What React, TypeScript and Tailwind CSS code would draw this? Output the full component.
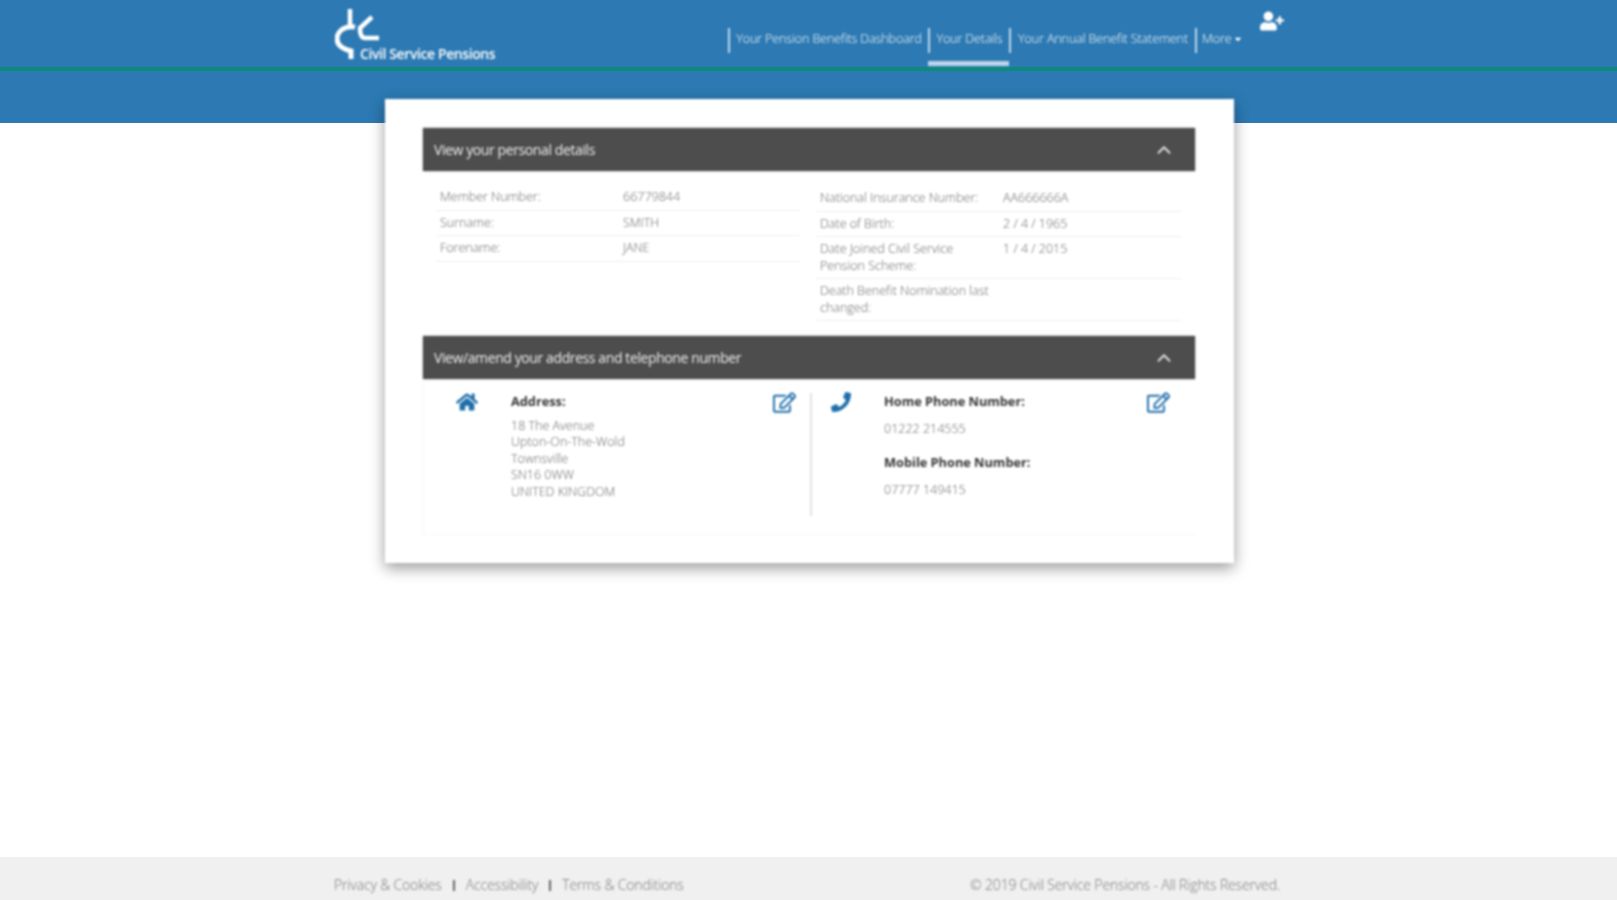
import { ChevronUp } from "lucide-react";
import { FaHome, FaPhone, FaUserPlus, FaRegEdit, FaCaretDown } from "react-icons/fa";

const leftRows = [
  { label: "Member Number:", value: "66779844" },
  { label: "Surname:", value: "SMITH" },
  { label: "Forename:", value: "JANE" },
];

const rightRows = [
  { label: "National Insurance Number:", value: "AA666666A" },
  { label: "Date of Birth:", value: "2 / 4 / 1965" },
  { label: "Date Joined Civil Service Pension Scheme:", value: "1 / 4 / 2015" },
  { label: "Death Benefit Nomination last changed:", value: "" },
];

const navItems = [
  { label: "Your Pension Benefits Dashboard", width: "w-[200px]" },
  { label: "Your Details", width: "w-[81px]", active: true },
  { label: "Your Annual Benefit Statement", width: "w-[186px]" },
];

function Logo() {
  return (
    <div className="relative h-[60px] w-[170px]">
      <svg viewBox="0 0 60 60" className="absolute left-0 top-0 h-[60px] w-[60px]" fill="none" stroke="#fff" strokeWidth="4.5">
        <path d="M15 1 V17" />
        <path d="M20 19 C9 17 2 24 2 31 C2 37 8 41 16 43 V51" strokeWidth="5" />
        <path d="M37 9 L25 20 Q25 30 30 30 H44" />
      </svg>
      <span className="absolute left-[25px] top-[37px] whitespace-nowrap text-[14px] font-semibold leading-[18px] tracking-[-0.4px] text-white">
        Civil Service Pensions
      </span>
    </div>
  );
}

function PanelHeader({ title }: { title: string }) {
  return (
    <div className="flex h-[43px] items-center justify-between bg-[#4d4d4d] pl-[11px] pr-[20px] text-[14px] tracking-[-0.4px] text-[#eeeeee] shadow-[0_0_2px_rgba(0,0,0,0.4)]">
      <span>{title}</span>
      <ChevronUp className="h-[22px] w-[22px] text-[#e4e4e4]" strokeWidth={2} />
    </div>
  );
}

function DetailRow({ label, value }: { label: string; value: string }) {
  return (
    <div className="flex border-b border-[#eeeeee] px-[4px] pb-[4px] pt-[4px] text-[12.5px] font-light leading-[16.5px] text-[#666666]">
      <div className="w-[183px] shrink-0 pr-[8px]">{label}</div>
      <div>{value}</div>
    </div>
  );
}

export default function App() {
  return (
    <div className="flex min-h-screen flex-col bg-white font-['Open_Sans',sans-serif]">
      <header className="h-[123px] bg-[#2c79b3]">
        <div className="h-[71px] border-b-[4px] border-[#0e8a7d]">
          <div className="ml-[335px] flex h-[67px] w-[990px] items-start blur-[0.8px]">
            <div className="w-[393px] pt-[8px]">
              <Logo />
            </div>
            <nav className="flex items-start pt-[28px] text-[12.5px] font-light tracking-[-0.1px] text-white">
              {navItems.map((item) => (
                <div key={item.label} className={`relative h-[25px] border-l-[2px] border-[#c4d8ea] text-center leading-[22px] whitespace-nowrap ${item.width}`}>
                  {item.label}
                  {item.active && <div className="absolute -left-[2px] top-[33px] h-[5px] w-[81px] bg-[#c0d4ea]" />}
                </div>
              ))}
              <div className="flex h-[25px] items-center gap-[2px] border-l-[2px] border-[#c4d8ea] pb-[3px] pl-[5px]">
                More <FaCaretDown className="h-[10px] w-[10px]" />
              </div>
            </nav>
            <FaUserPlus className="ml-[17px] mt-[11px] h-[20px] w-[24px] text-white" />
          </div>
        </div>
      </header>

      <main className="ml-[385px] -mt-[24px] w-[849px] bg-white pb-[28px] pl-[38px] pr-[39px] pt-[29px] shadow-[0_5px_14px_rgba(0,0,0,0.4)] blur-[0.8px]">
        <PanelHeader title="View your personal details" />
        <div className="flex gap-[16px] px-[13px] pb-[15px] pt-[14px]">
          <div className="w-[364px]">
            {leftRows.map((row) => (
              <DetailRow key={row.label} {...row} />
            ))}
          </div>
          <div className="mt-[1px] w-[365px]">
            {rightRows.map((row) => (
              <DetailRow key={row.label} {...row} />
            ))}
          </div>
        </div>

        <PanelHeader title="View/amend your address and telephone number" />
        <div className="flex border-b border-l border-[#f6f6f6] pb-[18px] pt-[14px] text-[12.5px] text-[#666666]">
          <div className="flex h-[123px] w-[386px] items-start">
            <div className="-mt-[1px] w-[87px] pl-[32px]">
              <FaHome className="h-[20px] w-[22px] text-[#1f6eab]" />
            </div>
            <div className="-mt-[1px] flex-1">
              <div className="text-[12.75px] font-bold leading-[18px] text-[#333333]">Address:</div>
              <div className="mt-[8px] font-light leading-[16.4px]">
                <div>18 The Avenue</div>
                <div>Upton-On-The-Wold</div>
                <div>Townsville</div>
                <div>SN16 0WW</div>
                <div>UNITED KINGDOM</div>
              </div>
            </div>
            <FaRegEdit className="-mt-[1px] mr-[14px] h-[21px] w-[23px] text-[#1f6eab]" />
          </div>
          <div className="flex h-[123px] flex-1 items-start border-l-[2px] border-[#e2e2e2]">
            <div className="-mt-[1px] w-[72px] pl-[19px]">
              <FaPhone className="h-[20px] w-[20px] text-[#1f6eab]" />
            </div>
            <div className="-mt-[1px] flex-1">
              <div className="text-[12.75px] font-bold leading-[18px] text-[#333333]">Home Phone Number:</div>
              <div className="mt-[10px] font-light leading-[18px]">01222 214555</div>
              <div className="mt-[15px] text-[12.75px] font-bold leading-[18px] text-[#333333]">Mobile Phone Number:</div>
              <div className="mt-[10px] font-light leading-[18px]">07777 149415</div>
            </div>
            <FaRegEdit className="-mt-[1px] mr-[25px] h-[21px] w-[23px] text-[#1f6eab]" />
          </div>
        </div>
      </main>

      <footer className="mt-auto h-[43px] bg-[#f0f0f0]">
        <div className="ml-[334px] flex w-[946px] items-center justify-between pt-[18px] text-[14px] font-light leading-[20px] tracking-[-0.15px] text-[#777777] blur-[0.8px]">
          <div className="flex items-center gap-[11px]">
            <span>Privacy &amp; Cookies</span>
            <span className="h-[11px] w-[2px] bg-[#666666]" />
            <span>Accessibility</span>
            <span className="h-[11px] w-[2px] bg-[#666666]" />
            <span>Terms &amp; Conditions</span>
          </div>
          <span>© 2019 Civil Service Pensions - All Rights Reserved.</span>
        </div>
      </footer>
    </div>
  );
}
